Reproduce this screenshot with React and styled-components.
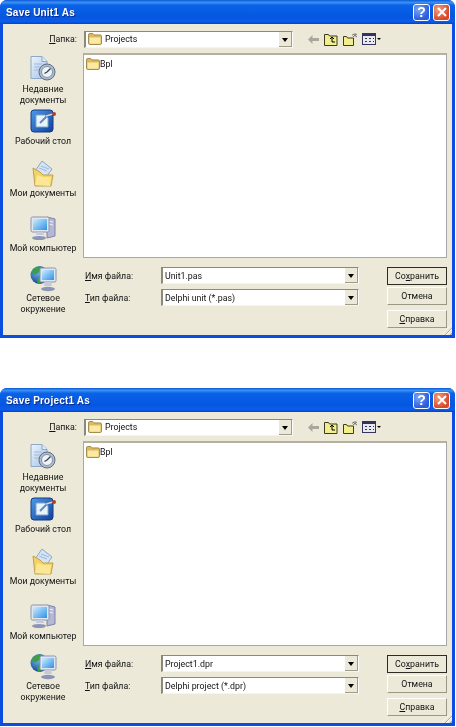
import styled, { createGlobalStyle } from "styled-components";

const GlobalStyle = createGlobalStyle`
  html, body {
    margin: 0;
    padding: 0;
    background: #fff;
    font-family: Roboto, "Liberation Sans", Arial, sans-serif;
  }
`;

const places = [
  { label: ["Недавние", "документы"], icon: <RecentIcon />, height: 52 },
  { label: ["Рабочий стол"], icon: <DesktopIcon />, height: 52 },
  { label: ["Мои документы"], icon: <DocumentsIcon />, height: 55 },
  { label: ["Мой компьютер"], icon: <ComputerIcon />, height: 50 },
  { label: ["Сетевое", "окружение"], icon: <NetworkIcon />, height: 52 },
];

function FolderIcon({ size = 14 }) {
  return (
    <svg width={size} height={size - 2} viewBox="0 0 14 12">
      <path d="M.5 3V1.800C.5 1 1 .5 1.800.5h3l1.200 1.400h6.200c.7 0 1.300.5 1.300 1.200v7c0 .8-.5 1.400-1.300 1.400H1.800C1 11.500.5 11 .5 10.200z" fill="#dcb95c" stroke="#8f7a34" strokeWidth=".8" />
      <path d="M1.500 4.500h11v5.800c0 .3-.2.5-.5.500H2c-.3 0-.5-.2-.5-.5z" fill="#fbe9a4" />
    </svg>
  );
}

function RecentIcon() {
  return (
    <svg width="26" height="25" viewBox="0 0 26 25">
      <defs>
        <linearGradient id="pageBlue" x1="0" y1="0" x2="1" y2="1">
          <stop offset="0" stopColor="#eef5fd" />
          <stop offset="1" stopColor="#a2c0e6" />
        </linearGradient>
      </defs>
      <path d="M1 .5h11l5 5v17H1z" fill="url(#pageBlue)" stroke="#8ea8c8" />
      <path d="M12 .5v5h5" fill="#dce9f7" stroke="#8ea8c8" />
      <path d="M4 8h8M4 11h6M4 14h5" stroke="#9cb8dc" />
      <circle cx="17" cy="16" r="8" fill="#aebccb" stroke="#5c6e82" />
      <circle cx="17" cy="16" r="5.500" fill="#eef3f8" stroke="#8394a6" />
      <path d="M17 16l3.500-3.500M17 16l-2.500 1.500" stroke="#34465a" strokeWidth="1.400" />
    </svg>
  );
}

function DesktopIcon() {
  return (
    <svg width="27" height="26" viewBox="0 0 27 26">
      <defs>
        <linearGradient id="deskBlue" x1="0" y1="0" x2="1" y2="1">
          <stop offset="0" stopColor="#4d9be8" />
          <stop offset="1" stopColor="#123f9a" />
        </linearGradient>
      </defs>
      <rect x="1" y="2" width="22" height="22" rx="3" fill="url(#deskBlue)" stroke="#123a84" />
      <path d="M6 7h9l3 3v9H6z" fill="#e9f3fb" stroke="#7ea3cc" />
      <path d="M10 15l7-7" stroke="#5b8bc2" strokeWidth="2" />
      <path d="M16 8l7-2" stroke="#d8d0c0" strokeWidth="1.500" />
      <circle cx="24" cy="6" r="2" fill="#a8432e" />
    </svg>
  );
}

function DocumentsIcon() {
  return (
    <svg width="24" height="27" viewBox="0 0 24 27">
      <path d="M11 1l10 8-7 10-10-8z" fill="#d4e4f6" stroke="#8aa7c8" />
      <path d="M8 8l8 3M10 6l8 3" stroke="#9db9d9" />
      <path d="M2 8l7 4 3 3h10l-2 11H4z" fill="#f3d266" stroke="#c0a04a" />
      <path d="M4 25l2-10 6 2h8l-1 9z" fill="#fbe793" />
    </svg>
  );
}

function ComputerIcon() {
  return (
    <svg width="27" height="26" viewBox="0 0 27 26">
      <defs>
        <linearGradient id="screenBlue" x1="0" y1="0" x2="1" y2="1">
          <stop offset="0" stopColor="#cdefff" />
          <stop offset="1" stopColor="#2f8fe6" />
        </linearGradient>
      </defs>
      <path d="M17 2l8 2v17l-8 2z" fill="#b4b8d4" stroke="#7e83a6" />
      <path d="M19 6l4 1M19 9l4 1" stroke="#eef" />
      <rect x="1" y="2" width="18" height="15" rx="1.500" fill="#dfe6f0" stroke="#8a95b0" />
      <rect x="3" y="4" width="14" height="11" fill="url(#screenBlue)" />
      <path d="M7 17h6l1 3H6z" fill="#c4cadb" />
      <ellipse cx="9" cy="23" rx="7" ry="2" fill="#8b95b8" />
    </svg>
  );
}

function NetworkIcon() {
  return (
    <svg width="27" height="27" viewBox="0 0 27 27">
      <defs>
        <radialGradient id="globeBlue" cx=".4" cy=".35" r=".7">
          <stop offset="0" stopColor="#6fb6ea" />
          <stop offset="1" stopColor="#0c3f8e" />
        </radialGradient>
      </defs>
      <circle cx="9.500" cy="10" r="9" fill="url(#globeBlue)" />
      <path d="M3 4c3-2 7-3 9-2 1 2-1 4-3 5-1 2-4 3-6 2-1-2-1-3 0-5zM7 13c2 0 4 1 4 3s-1 3-2 3-2-3-2-6z" fill="#3d9e4a" />
      <rect x="10" y="3" width="16" height="14" rx="1.500" fill="#dfe6f0" stroke="#8a95b0" />
      <rect x="12" y="5" width="12" height="10" fill="url(#screenBlue)" />
      <path d="M15 17h6l1 4h-8z" fill="#c4cadb" />
      <ellipse cx="18" cy="24" rx="7" ry="2.200" fill="#8b95b8" />
    </svg>
  );
}

function ToolbarIcons() {
  return (
    <Toolbar>
      <svg width="11" height="9" viewBox="0 0 11 9">
        <path d="M0 4.500L4.500 0v3H11v3H4.500v3z" fill="#a8a89c" />
      </svg>
      <svg width="14" height="13" viewBox="0 0 14 13">
        <path d="M.5 3V1.500h4l1 1.500h7.500v9.500H.5z" fill="#f3ee8c" stroke="#3e3a1c" />
        <path d="M6 6l2-2 2 2M8 4.500V9h3" fill="none" stroke="#000" />
      </svg>
      <svg width="14" height="13" viewBox="0 0 14 13">
        <path d="M.5 5V3.500h3l1 1.500h6v7.500H.5z" fill="#f3ee8c" stroke="#3e3a1c" />
        <path d="M12 0v3M10 1l4 3M14 1l-4 3M9 2h1" stroke="#77776a" />
      </svg>
      <svg width="19" height="12" viewBox="0 0 19 12">
        <rect x=".5" y=".5" width="13" height="11" fill="#e8e8f0" stroke="#34345c" />
        <rect x="1" y="1" width="12" height="2" fill="#34345c" />
        <path d="M3 5h2v1H3zM7 5h2v1H7zM11 5h1v1h-1zM3 8h2v1H3zM7 8h2v1H7zM11 8h1v1h-1z" fill="#34345c" />
        <path d="M15 5h4l-2 2z" fill="#000" />
      </svg>
    </Toolbar>
  );
}

function ComboBox({ value, wide, withFolder }) {
  return (
    <Combo $wide={wide}>
      <ComboText>
        {withFolder && <FolderIcon />}
        {value}
      </ComboText>
      <ComboArrow />
    </Combo>
  );
}

function SaveDialog({ title, fileName, fileType }) {
  return (
    <Dialog>
      <TitleBar>
        <TitleText>{title}</TitleText>
        <TitleButton $kind="help">?</TitleButton>
        <TitleButton $kind="close">
          <svg width="10" height="10" viewBox="0 0 10 10">
            <path d="M1 1l8 8M9 1l-8 8" stroke="#fff" strokeWidth="2" />
          </svg>
        </TitleButton>
      </TitleBar>
      <Panel>
        <TopRow>
          <FolderLabel>
            <Key>П</Key>апка:
          </FolderLabel>
          <ComboBox value="Projects" withFolder />
          <ToolbarIcons />
        </TopRow>
        <Main>
          <Sidebar>
            {places.map((place) => (
              <Place key={place.label[0]} $height={place.height}>
                <PlaceIcon>{place.icon}</PlaceIcon>
                {place.label.map((line) => (
                  <PlaceLabel key={line}>{line}</PlaceLabel>
                ))}
              </Place>
            ))}
          </Sidebar>
          <Content>
            <FileList>
              <FileItem>
                <FolderIcon />
                Bpl
              </FileItem>
            </FileList>
            <Bottom>
              <Fields>
                <FieldRow>
                  <FieldLabel>
                    <Key>И</Key>мя файла:
                  </FieldLabel>
                  <ComboBox value={fileName} wide />
                </FieldRow>
                <FieldRow>
                  <FieldLabel>
                    <Key>Т</Key>ип файла:
                  </FieldLabel>
                  <ComboBox value={fileType} wide />
                </FieldRow>
              </Fields>
              <Buttons>
                <Button $default>
                  Со<Key>х</Key>ранить
                </Button>
                <Button>Отмена</Button>
                <Button $spaced>
                  <Key>С</Key>правка
                </Button>
              </Buttons>
            </Bottom>
          </Content>
        </Main>
        <Grip />
      </Panel>
    </Dialog>
  );
}

export default function App() {
  return (
    <Page>
      <GlobalStyle />
      <SaveDialog title="Save Unit1 As" fileName="Unit1.pas" fileType="Delphi unit (*.pas)" />
      <SaveDialog title="Save Project1 As" fileName="Project1.dpr" fileType="Delphi project (*.dpr)" />
    </Page>
  );
}

const Page = styled.div`
  width: 456px;
  height: 727px;
  display: flex;
  flex-direction: column;
  gap: 50px;
  overflow: hidden;
`;

const Dialog = styled.div`
  width: 455px;
  height: 338px;
  display: flex;
  flex-direction: column;
  background: #0a4de0;
  border-radius: 7px 7px 0 0;
  overflow: hidden;
  filter: blur(0.3px);
`;

const TitleBar = styled.div`
  height: 24px;
  flex: none;
  display: flex;
  align-items: center;
  gap: 3px;
  padding: 0 5px 0 6px;
  background: linear-gradient(180deg, #0a5ad8 0%, #3a90f4 10%, #0a62e8 22%, #0557e0 70%, #0a5cec 90%, #0344c4 100%);
`;

const TitleText = styled.div`
  flex: 1;
  color: #fff;
  font-family: "Liberation Sans", sans-serif;
  font-weight: 700;
  font-size: 10px;
  letter-spacing: 0.2px;
  text-shadow: 1px 1px 0 #0a2c90;
`;

const TitleButton = styled.div`
  width: 15px;
  height: 15px;
  display: flex;
  align-items: center;
  justify-content: center;
  border: 1px solid #fff;
  border-radius: 3px;
  color: #fff;
  font-family: "Liberation Sans", sans-serif;
  font-weight: 700;
  font-size: 14px;
  background: ${(props) =>
    props.$kind === "close"
      ? "radial-gradient(circle at 30% 30%, #f0a080, #d8482a 70%)"
      : "radial-gradient(circle at 30% 30%, #7ea8f0, #2a5ce0 70%)"};
`;

const Panel = styled.div`
  position: relative;
  flex: 1;
  margin: 0 3px 3px;
  background: #ece9d8;
  display: flex;
  flex-direction: column;
  font-size: 8.800px;
  color: #111;
`;

const TopRow = styled.div`
  height: 29px;
  flex: none;
  display: flex;
  align-items: center;
  box-sizing: border-box;
  padding-top: 1px;
`;

const FolderLabel = styled.div`
  width: 74px;
  text-align: right;
  margin-right: 7px;
`;

const Key = styled.span`
  text-decoration: underline;
`;

const Combo = styled.div`
  width: ${(props) => (props.$wide ? "198px" : "209px")};
  height: 17px;
  box-sizing: border-box;
  display: flex;
  align-items: center;
  background: #fff;
  border: 1px solid #fff;
  border-top: 1px solid #8c887a;
  border-left: 2px solid #8c887a;
  border-bottom-color: #f6f4ec;
`;

const ComboText = styled.div`
  flex: 1;
  display: flex;
  align-items: center;
  gap: 3px;
  padding-left: 2px;
  white-space: nowrap;
`;

const ComboArrow = styled.div`
  width: 13px;
  height: 15px;
  flex: none;
  box-sizing: border-box;
  background: #ece9d8;
  border-right: 1px solid #a09c8c;
  border-bottom: 1px solid #a09c8c;
  position: relative;
  &::after {
    content: "";
    position: absolute;
    left: 3px;
    top: 6px;
    border: 3px solid transparent;
    border-top: 4px solid #000;
    border-bottom: none;
  }
`;

const Toolbar = styled.div`
  display: flex;
  align-items: center;
  gap: 5px;
  margin-left: 15px;
`;

const Main = styled.div`
  flex: 1;
  display: flex;
`;

const Sidebar = styled.div`
  width: 80px;
  flex: none;
  display: flex;
  flex-direction: column;
`;

const Place = styled.div`
  height: ${(props) => props.$height}px;
  padding-top: 3px;
  box-sizing: border-box;
  display: flex;
  flex-direction: column;
  align-items: center;
`;

const PlaceIcon = styled.div`
  height: 28px;
  flex: none;
  display: flex;
  align-items: flex-start;
  justify-content: center;
`;

const PlaceLabel = styled.div`
  line-height: 10.500px;
  white-space: nowrap;
`;

const Content = styled.div`
  flex: 1;
  display: flex;
  flex-direction: column;
  margin-right: 5px;
`;

const FileList = styled.div`
  height: 205px;
  flex: none;
  box-sizing: border-box;
  background: #fff;
  border: 1px solid #a4a8ac;
  border-top: 2px solid #b4b1a2;
  padding: 2px 2px;
`;

const FileItem = styled.div`
  display: flex;
  align-items: center;
  height: 13px;
`;

const Bottom = styled.div`
  flex: 1;
  display: flex;
  padding-top: 9px;
`;

const Fields = styled.div`
  width: 276px;
  margin-right: 28px;
  display: flex;
  flex-direction: column;
  gap: 5px;
`;

const FieldRow = styled.div`
  display: flex;
  align-items: center;
  padding-left: 2px;
`;

const FieldLabel = styled.div`
  width: 76px;
  flex: none;
`;

const Buttons = styled.div`
  width: 60px;
  display: flex;
  flex-direction: column;
  gap: 2px;
`;

const Button = styled.div`
  height: 18px;
  box-sizing: border-box;
  display: flex;
  align-items: center;
  justify-content: center;
  background: #ece9d8;
  margin-top: ${(props) => (props.$spaced ? "3px" : "0")};
  border: 1px solid #fff;
  border-right-color: #9c9888;
  border-bottom-color: #9c9888;
  ${(props) => props.$default && "border: 1px solid #2c2c24;"}
`;

const Grip = styled.div`
  position: absolute;
  right: 0;
  bottom: 0;
  width: 11px;
  height: 11px;
  background: repeating-linear-gradient(135deg, transparent 0 2px, #aca899 2px 3px, #fff 3px 4px);
  clip-path: polygon(100% 0, 100% 100%, 0 100%);
`;
